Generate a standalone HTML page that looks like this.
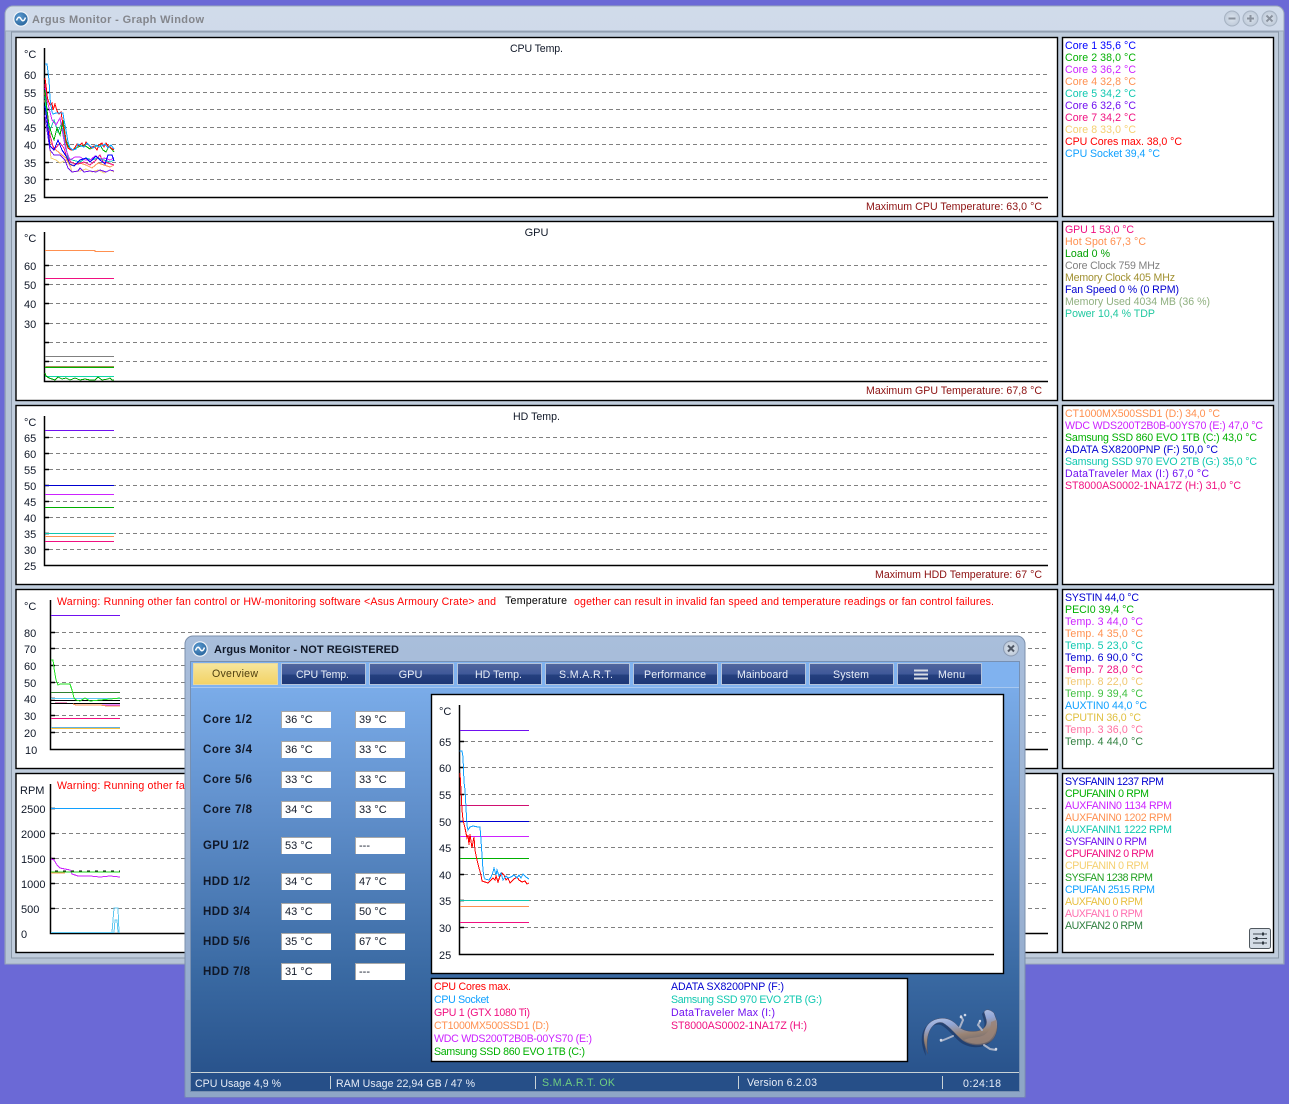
<!DOCTYPE html>
<html><head><meta charset="utf-8"><title>Argus Monitor</title>
<style>
html,body{margin:0;padding:0;background:#6b69d6;width:1289px;height:1104px;overflow:hidden}
svg{display:block;position:absolute;left:0;top:0}
text{font-family:"Liberation Sans",sans-serif;font-size:11px;fill:#101828}
text[textLength]{font-size:10.6px}
.b{font-weight:bold}
.w{fill:#e8eef8}
.g line.d,.d{stroke:#808080;stroke-dasharray:4 3;stroke-width:1;shape-rendering:crispEdges}
polyline{fill:none;stroke-width:1;shape-rendering:crispEdges}
.bl{stroke:#000;stroke-width:1.5;fill:none}
.bx{fill:#fff;stroke:#000;stroke-width:1.4}
.fb{fill:#fff;stroke:none}
.tab{stroke:#b4c4dc;stroke-width:1;fill:url(#tabg)}
</style></head><body>
<svg width="1289" height="1104" viewBox="0 0 1289 1104" xmlns="http://www.w3.org/2000/svg">
<defs>
<linearGradient id="tb" x1="0" y1="0" x2="0" y2="1"><stop offset="0" stop-color="#d0dbea"/><stop offset="1" stop-color="#b5c3d6"/></linearGradient>
<linearGradient id="dt" x1="0" y1="0" x2="0" y2="1"><stop offset="0" stop-color="#a9bedb"/><stop offset="1" stop-color="#8fa8cb"/></linearGradient>
<linearGradient id="body" x1="0" y1="0" x2="0" y2="1"><stop offset="0" stop-color="#80b2ef"/><stop offset="0.35" stop-color="#608fcb"/><stop offset="0.72" stop-color="#3a6aa3"/><stop offset="1" stop-color="#264f88"/></linearGradient>
<linearGradient id="tabg" x1="0" y1="0" x2="0" y2="1"><stop offset="0" stop-color="#52679f"/><stop offset="0.5" stop-color="#3f5899"/><stop offset="0.55" stop-color="#25407f"/><stop offset="1" stop-color="#1c3675"/></linearGradient>
<linearGradient id="gold" x1="0" y1="0" x2="0" y2="1"><stop offset="0" stop-color="#f6e69c"/><stop offset="1" stop-color="#f3d264"/></linearGradient>
<linearGradient id="liz" x1="0" y1="0" x2="0.3" y2="1"><stop offset="0" stop-color="#d2ddf4"/><stop offset="0.4" stop-color="#93a7d6"/><stop offset="0.65" stop-color="#9a8474"/><stop offset="1" stop-color="#55586a"/></linearGradient>
<radialGradient id="ico" cx="0.4" cy="0.35" r="0.8"><stop offset="0" stop-color="#5b9ad0"/><stop offset="1" stop-color="#1f5a92"/></radialGradient>
<radialGradient id="btn" cx="0.5" cy="0.5" r="0.6"><stop offset="0" stop-color="#dce4ee"/><stop offset="0.7" stop-color="#c4cfdd"/><stop offset="1" stop-color="#a4b0c0"/></radialGradient>
</defs>

<!-- Main window -->
<path d="M5,964V14a8,8 0 0 1 8,-8H1276a8,8 0 0 1 8,8V964Z" fill="url(#tb)" stroke="#9aa8bb"/>
<rect x="5.5" y="31" width="1278" height="933" fill="#b6c4d6" stroke="#9aa8bb"/>
<rect x="11.5" y="32" width="1267" height="926" fill="#c0cddd" stroke="#8a98a8"/>
<circle cx="21" cy="19" r="7.2" fill="url(#ico)" stroke="#f0f4fa" stroke-width="1.2"/>
<path d="M16.5,20.5c1.5,-4 3,-4 4.5,-1.5s3,2.5 4.5,-1.5" stroke="#fff" stroke-width="1.5" fill="none"/>
<text x="32" y="23" class="b" style="fill:#84868c;font-size:11px" textLength="172">Argus Monitor - Graph Window</text>
<g fill="url(#btn)" stroke="#a6b2c2"><circle cx="1232" cy="18.5" r="7.5"/><circle cx="1250.5" cy="18.5" r="7.5"/><circle cx="1269.5" cy="18.5" r="7.5"/></g>
<g stroke="#8a929e" stroke-width="2" fill="none"><path d="M1228.5,18.5h7"/><path d="M1247,18.5h7M1250.5,15v7"/><path d="M1266.5,15.5l6,6M1272.5,15.5l-6,6"/></g>

<!-- Panels -->
<g class="bx">
<rect class="bx" x="16" y="37.5" width="1041.5" height="179"/><rect class="bx" x="1062.5" y="37.5" width="211" height="179"/>
<rect class="bx" x="16" y="221.5" width="1041.5" height="179"/><rect class="bx" x="1062.5" y="221.5" width="211" height="179"/>
<rect class="bx" x="16" y="405.5" width="1041.5" height="179"/><rect class="bx" x="1062.5" y="405.5" width="211" height="179"/>
<rect class="bx" x="16" y="589.5" width="1041.5" height="179"/><rect class="bx" x="1062.5" y="589.5" width="211" height="179"/>
<rect class="bx" x="16" y="773.5" width="1041.5" height="179"/><rect class="bx" x="1062.5" y="773.5" width="211" height="179"/>
</g>

<!-- CPU panel -->
<text x="536.5" y="52" text-anchor="middle" textLength="53">CPU Temp.</text>
<g><text x="24" y="58">°C</text><text x="24" y="79">60</text><text x="24" y="97">55</text><text x="24" y="114">50</text><text x="24" y="132">45</text><text x="24" y="149">40</text><text x="24" y="167">35</text><text x="24" y="184">30</text><text x="24" y="202">25</text></g>
<g class="d"><line x1="49" x2="1048" y1="74.5" y2="74.5"/><line x1="49" x2="1048" y1="92.5" y2="92.5"/><line x1="49" x2="1048" y1="109.5" y2="109.5"/><line x1="49" x2="1048" y1="127.5" y2="127.5"/><line x1="49" x2="1048" y1="144.5" y2="144.5"/><line x1="49" x2="1048" y1="162.5" y2="162.5"/><line x1="49" x2="1048" y1="179.5" y2="179.5"/></g>
<path class="bl" d="M44.5,48V197.5H1048M44,74.5h5M44,92.5h5M44,109.5h5M44,127.5h5M44,144.5h5M44,162.5h5M44,179.5h5"/>
<polyline stroke="#f5d070" points="45,100 47,120 49,140 51,158 56,160 60,163 66,160 70,165 72,172 80,171 86,169 92,172 98,170 104,173 110,170 114,172"/>
<polyline stroke="#7010f0" points="45,115 47,130 50,150 54,155 60,155 65,160 68,168 72,172 78,171 80,168 84,172 90,171 96,172 100,170 106,172 110,170 114,171"/>
<polyline stroke="#ff9050" points="45,92 47,118 50,142 56,150 62,155 66,158 70,166 74,165 80,163 86,165 92,168 98,163 104,165 110,167 114,165"/>
<polyline stroke="#f01080" points="45,84 47,112 50,135 54,150 60,143 64,148 67,158 72,163 78,164 84,162 90,165 96,160 100,155 103,162 108,163 114,165"/>
<polyline stroke="#10c8b0" points="45,96 47,122 50,130 54,120 58,132 62,122 65,142 68,158 72,160 80,162 86,158 92,160 98,158 104,160 110,162 114,160"/>
<polyline stroke="#cc22ff" points="45,88 47,100 49,108 52,120 56,125 60,118 63,135 66,150 70,160 75,157 80,157 85,160 90,160 95,156 100,160 104,158 110,160 114,158"/>
<polyline stroke="#0000ff" points="45,106 47,120 50,146 54,150 58,140 62,150 66,156 70,164 74,166 80,160 86,158 90,162 96,156 100,160 105,164 108,155 112,155 114,161"/>
<polyline stroke="#00b000" points="45,90 47,110 49,125 52,135 54,140 57,128 60,135 63,120 66,140 68,146 72,150 78,147 84,145 90,149 96,146 100,145 103,150 106,152 109,146 114,152"/>
<polyline stroke="#ff0000" points="45,78 46,85 47,95 48,100 50,105 52,103 53,110 55,104 57,111 59,114 61,112 63,125 65,135 66,142 68,148 71,150 74,149 77,144 79,146 82,143 84,147 86,142 88,144 91,148 94,146 97,150 99,145 102,143 104,147 106,143 108,146 111,148 114,150"/>
<polyline stroke="#10a0ff" points="45,64 47,64 48,72 49,80 50,98 52,112 53,114 56,113 63,113 64,120 66,130 68,142 70,148 73,150 76,149 78,144 81,146 84,147 87,143 90,146 93,148 96,145 99,147 102,146 105,144 108,148 111,145 114,149"/>
<text x="1042" y="210" text-anchor="end" style="fill:#8c1010" textLength="176">Maximum CPU Temperature: 63,0 °C</text>
<g><text x="1065" y="49" style="fill:#0000ff" textLength="71">Core 1 35,6 °C</text><text x="1065" y="61" style="fill:#00b000" textLength="71">Core 2 38,0 °C</text><text x="1065" y="73" style="fill:#cc22ff" textLength="71">Core 3 36,2 °C</text><text x="1065" y="85" style="fill:#ff9050" textLength="71">Core 4 32,8 °C</text><text x="1065" y="97" style="fill:#10c8b0" textLength="71">Core 5 34,2 °C</text><text x="1065" y="109" style="fill:#7010f0" textLength="71">Core 6 32,6 °C</text><text x="1065" y="121" style="fill:#f01080" textLength="71">Core 7 34,2 °C</text><text x="1065" y="133" style="fill:#f5d070" textLength="71">Core 8 33,0 °C</text><text x="1065" y="145" style="fill:#ff0000" textLength="117">CPU Cores max. 38,0 °C</text><text x="1065" y="157" style="fill:#10a0ff" textLength="95">CPU Socket 39,4 °C</text></g>

<!-- GPU panel -->
<text x="536.5" y="236" text-anchor="middle">GPU</text>
<g><text x="24" y="242">°C</text><text x="24" y="270">60</text><text x="24" y="289">50</text><text x="24" y="308">40</text><text x="24" y="328">30</text></g>
<g class="d"><line x1="49" x2="1048" y1="265.5" y2="265.5"/><line x1="49" x2="1048" y1="284.5" y2="284.5"/><line x1="49" x2="1048" y1="303.5" y2="303.5"/><line x1="49" x2="1048" y1="323.5" y2="323.5"/><line x1="49" x2="1048" y1="342.5" y2="342.5"/><line x1="49" x2="1048" y1="361.5" y2="361.5"/></g>
<path class="bl" d="M44.5,232V381.5H1048M44,265.5h5M44,284.5h5M44,303.5h5M44,323.5h5M44,342.5h5M44,361.5h5"/>
<polyline stroke="#ff9050" points="45,250.5 95,250.5 95,251.5 114,251.5"/>
<polyline stroke="#f01080" points="45,278.5 114,278.5"/>
<polyline stroke="#808080" points="45,356.5 114,356.5"/>
<polyline stroke="#a09050" points="45,366.5 114,366.5"/>
<polyline stroke="#00b000" points="45,367.5 114,367.5"/>
<polyline stroke="#10d8a8" points="45,376.5 114,376.5"/>
<polyline stroke="#00a000" points="45,373 46,376 49,378 52,379 55,380 58,377 62,379 66,378 70,380 75,378 80,380 85,379 90,380 95,380 98,377 102,380 108,379 110,378 112,380 114,380"/>
<text x="1042" y="394" text-anchor="end" style="fill:#8c1010" textLength="176">Maximum GPU Temperature: 67,8 °C</text>
<g><text x="1065" y="233" style="fill:#f01080" textLength="69">GPU 1 53,0 °C</text><text x="1065" y="245" style="fill:#ff9050" textLength="81">Hot Spot 67,3 °C</text><text x="1065" y="257" style="fill:#00a000" textLength="45">Load 0 %</text><text x="1065" y="269" style="fill:#808080" textLength="95">Core Clock 759 MHz</text><text x="1065" y="281" style="fill:#a09030" textLength="110">Memory Clock 405 MHz</text><text x="1065" y="293" style="fill:#0000d0" textLength="114">Fan Speed 0 % (0 RPM)</text><text x="1065" y="305" style="fill:#90b080" textLength="145">Memory Used 4034 MB (36 %)</text><text x="1065" y="317" style="fill:#20c8a0" textLength="90">Power 10,4 % TDP</text></g>

<!-- HD panel -->
<text x="536.5" y="420" text-anchor="middle" textLength="47">HD Temp.</text>
<g><text x="24" y="426">°C</text><text x="24" y="442">65</text><text x="24" y="458">60</text><text x="24" y="474">55</text><text x="24" y="490">50</text><text x="24" y="506">45</text><text x="24" y="522">40</text><text x="24" y="538">35</text><text x="24" y="554">30</text><text x="24" y="570">25</text></g>
<g class="d"><line x1="49" x2="1048" y1="437.5" y2="437.5"/><line x1="49" x2="1048" y1="453.5" y2="453.5"/><line x1="49" x2="1048" y1="469.5" y2="469.5"/><line x1="49" x2="1048" y1="485.5" y2="485.5"/><line x1="49" x2="1048" y1="501.5" y2="501.5"/><line x1="49" x2="1048" y1="517.5" y2="517.5"/><line x1="49" x2="1048" y1="533.5" y2="533.5"/><line x1="49" x2="1048" y1="549.5" y2="549.5"/></g>
<path class="bl" d="M44.5,416V565.5H1048M44,437.5h5M44,453.5h5M44,469.5h5M44,485.5h5M44,501.5h5M44,517.5h5M44,533.5h5M44,549.5h5"/>
<polyline stroke="#7010f0" points="45,430.5 114,430.5"/>
<polyline stroke="#0000d0" points="45,485.5 114,485.5"/>
<polyline stroke="#cc22ff" points="45,494.5 114,494.5"/>
<polyline stroke="#00b000" points="45,507.5 114,507.5"/>
<polyline stroke="#10c8b0" points="45,533.5 114,533.5"/>
<polyline stroke="#ff9050" points="45,536.5 114,536.5"/>
<polyline stroke="#f01080" points="45,541.5 114,541.5"/>
<text x="1042" y="578" text-anchor="end" style="fill:#8c1010" textLength="167">Maximum HDD Temperature: 67 °C</text>
<g><text x="1065" y="417" style="fill:#ff9050" textLength="155">CT1000MX500SSD1 (D:) 34,0 °C</text><text x="1065" y="429" style="fill:#cc22ff" textLength="198">WDC WDS200T2B0B-00YS70 (E:) 47,0 °C</text><text x="1065" y="441" style="fill:#00b000" textLength="192">Samsung SSD 860 EVO 1TB (C:) 43,0 °C</text><text x="1065" y="453" style="fill:#0000d0" textLength="153">ADATA SX8200PNP (F:) 50,0 °C</text><text x="1065" y="465" style="fill:#10c8b0" textLength="192">Samsung SSD 970 EVO 2TB (G:) 35,0 °C</text><text x="1065" y="477" style="fill:#7010f0" textLength="144">DataTraveler Max (I:) 67,0 °C</text><text x="1065" y="489" style="fill:#f01080" textLength="176">ST8000AS0002-1NA17Z (H:) 31,0 °C</text></g>

<!-- Temperature panel -->
<g><text x="24" y="610">°C</text><text x="24" y="637">80</text><text x="24" y="653">70</text><text x="24" y="670">60</text><text x="24" y="687">50</text><text x="24" y="703">40</text><text x="24" y="720">30</text><text x="24" y="737">20</text><text x="25" y="754">10</text></g>
<g class="d"><line x1="55" x2="1048" y1="632.5" y2="632.5"/><line x1="55" x2="1048" y1="648.5" y2="648.5"/><line x1="55" x2="1048" y1="665.5" y2="665.5"/><line x1="55" x2="1048" y1="682.5" y2="682.5"/><line x1="55" x2="1048" y1="698.5" y2="698.5"/><line x1="55" x2="1048" y1="715.5" y2="715.5"/><line x1="55" x2="1048" y1="732.5" y2="732.5"/></g>
<path class="bl" d="M50.5,600V749.5H1048M50,632.5h5M50,648.5h5M50,665.5h5M50,682.5h5M50,698.5h5M50,715.5h5M50,732.5h5"/>
<polyline stroke="#7010f0" points="51,615.5 120,615.5"/>
<polyline stroke="#308030" points="51,692.5 120,692.5"/>
<polyline stroke="#60c8f0" points="51,698.5 120,698.5"/>
<polyline stroke="#000" points="51,700.5 120,700.5"/>
<polyline stroke="#000" points="51,703.5 120,703.5"/>
<polyline stroke="#f090c0" points="55,702.5 67,702.5"/>
<polyline stroke="#cc22ff" points="82,705 120,705"/>
<polyline stroke="#ff9050" points="73,704 76,705 100,705 107,706 120,706"/>
<polyline stroke="#20e020" points="51,660 53,660 54,668 56,680 58,685 60,684 70,684 72,690 74,698 76,700 80,701 85,698 90,701 100,700 110,699 120,698"/>
<polyline stroke="#f01080" points="51,718.5 120,718.5"/>
<polyline stroke="#60b0e0" points="51,727.5 120,727.5"/>
<polyline stroke="#f5c040" points="51,728.5 120,728.5"/>
<text x="57" y="605" style="fill:#ff0000" textLength="439">Warning: Running other fan control or HW-monitoring software &lt;Asus Armoury Crate&gt; and</text>
<text x="505" y="604" style="fill:#000" textLength="62">Temperature</text>
<text x="574" y="605" style="fill:#ff0000" textLength="420">ogether can result in invalid fan speed and temperature readings or fan control failures.</text>
<g><text x="1065" y="601" style="fill:#0000d0" textLength="74">SYSTIN 44,0 °C</text><text x="1065" y="613" style="fill:#00b000" textLength="69">PECI0 39,4 °C</text><text x="1065" y="625" style="fill:#cc22ff" textLength="78">Temp. 3 44,0 °C</text><text x="1065" y="637" style="fill:#ff9050" textLength="78">Temp. 4 35,0 °C</text><text x="1065" y="649" style="fill:#10c8b0" textLength="78">Temp. 5 23,0 °C</text><text x="1065" y="661" style="fill:#0000d0" textLength="78">Temp. 6 90,0 °C</text><text x="1065" y="673" style="fill:#f01080" textLength="78">Temp. 7 28,0 °C</text><text x="1065" y="685" style="fill:#f0c870" textLength="78">Temp. 8 22,0 °C</text><text x="1065" y="697" style="fill:#40c040" textLength="78">Temp. 9 39,4 °C</text><text x="1065" y="709" style="fill:#10a0ff" textLength="82">AUXTIN0 44,0 °C</text><text x="1065" y="721" style="fill:#e0c040" textLength="76">CPUTIN 36,0 °C</text><text x="1065" y="733" style="fill:#ff70a0" textLength="78">Temp. 3 36,0 °C</text><text x="1065" y="745" style="fill:#308040" textLength="78">Temp. 4 44,0 °C</text></g>

<!-- RPM panel -->
<g><text x="20" y="794">RPM</text><text x="21" y="813">2500</text><text x="21" y="838">2000</text><text x="21" y="863">1500</text><text x="21" y="888">1000</text><text x="21" y="913">500</text><text x="21" y="938">0</text></g>
<g class="d"><line x1="55" x2="1048" y1="808.5" y2="808.5"/><line x1="55" x2="1048" y1="833.5" y2="833.5"/><line x1="55" x2="1048" y1="858.5" y2="858.5"/><line x1="55" x2="1048" y1="883.5" y2="883.5"/><line x1="55" x2="1048" y1="908.5" y2="908.5"/></g>
<path class="bl" d="M50.5,784V933.5H1048M50,808.5h5M50,833.5h5M50,858.5h5M50,883.5h5M50,908.5h5"/>
<polyline stroke="#10a0ff" stroke-width="1.3" points="51,808.5 120,808.5"/>
<polyline stroke="#cc22ff" points="51,859 54,860 57,865 60,868 70,870 72,874 78,876 90,876 100,877 110,876 120,877"/>
<polyline stroke="#ff9050" points="51,873 65,873"/>
<polyline stroke="#20d020" points="51,872 120,872"/>
<polyline stroke="#000" stroke-dasharray="3 5" points="55,871 120,871"/>
<polyline stroke="#60c8f0" points="51,932.5 112,932.5 113,920 114,908 118,908 119,932.5 120,932.5"/>
<polyline stroke="#60c8f0" points="112,932.5 114,932.5 115,920 117,920 118,932.5"/>
<text x="57" y="789" style="fill:#ff0000" textLength="439">Warning: Running other fan control or HW-monitoring software &lt;Asus Armoury Crate&gt; and</text>
<g><text x="1065" y="785" style="fill:#0000d0" textLength="99">SYSFANIN 1237 RPM</text><text x="1065" y="797" style="fill:#00b000" textLength="84">CPUFANIN 0 RPM</text><text x="1065" y="809" style="fill:#cc22ff" textLength="107">AUXFANIN0 1134 RPM</text><text x="1065" y="821" style="fill:#ff9050" textLength="107">AUXFANIN0 1202 RPM</text><text x="1065" y="833" style="fill:#10c8b0" textLength="107">AUXFANIN1 1222 RPM</text><text x="1065" y="845" style="fill:#7010f0" textLength="82">SYSFANIN 0 RPM</text><text x="1065" y="857" style="fill:#f01080" textLength="89">CPUFANIN2 0 RPM</text><text x="1065" y="869" style="fill:#f5d070" textLength="84">CPUFANIN 0 RPM</text><text x="1065" y="881" style="fill:#20a020" textLength="88">SYSFAN 1238 RPM</text><text x="1065" y="893" style="fill:#10a0ff" textLength="90">CPUFAN 2515 RPM</text><text x="1065" y="905" style="fill:#e8c040" textLength="78">AUXFAN0 0 RPM</text><text x="1065" y="917" style="fill:#ff70b0" textLength="78">AUXFAN1 0 RPM</text><text x="1065" y="929" style="fill:#308040" textLength="78">AUXFAN2 0 RPM</text></g>
<rect x="1249.5" y="928.5" width="21" height="20" rx="2" fill="#d5dde6" stroke="#50585f"/>
<path d="M1253,934h14M1253,938.5h14M1253,943h14" stroke="#404850" stroke-width="1"/>
<path d="M1262,932.5h2v3h-2zM1255.5,937h2v3h-2zM1262,941.5h2v3h-2z" fill="#303840"/>

<!-- Dialog -->
<path d="M185,1097V644a8,8 0 0 1 8,-8H1017a8,8 0 0 1 8,8V1097Z" fill="url(#dt)" stroke="#7c90ac"/>
<rect x="186" y="1000" width="838" height="97" fill="#8ea6c6"/>
<rect x="190.5" y="661.5" width="829" height="430" fill="url(#body)" stroke="#7790b2"/>
<rect x="191" y="662" width="828" height="26" fill="#80b2ef"/>
<line x1="191" x2="1019" y1="687.5" y2="687.5" stroke="#a8c8f0"/>
<circle cx="200" cy="649" r="7.2" fill="url(#ico)" stroke="#f0f4fa" stroke-width="1.2"/>
<path d="M195.5,650.5c1.5,-4 3,-4 4.5,-1.5s3,2.5 4.5,-1.5" stroke="#fff" stroke-width="1.5" fill="none"/>
<text x="214" y="653" class="b" style="font-size:11px" textLength="185">Argus Monitor - NOT REGISTERED</text>
<circle cx="1011" cy="648.5" r="7.5" fill="url(#btn)" stroke="#8c9cb4"/>
<path d="M1008,645.5l6,6M1014,645.5l-6,6" stroke="#505866" stroke-width="2"/>

<!-- Tabs -->
<rect x="193.5" y="663.5" width="84" height="21" fill="url(#gold)" stroke="#e8d8a0"/>
<rect class="tab" x="281.5" y="663.5" width="84" height="21"/><rect class="tab" x="369.5" y="663.5" width="84" height="21"/><rect class="tab" x="457.5" y="663.5" width="84" height="21"/><rect class="tab" x="545.5" y="663.5" width="84" height="21"/><rect class="tab" x="633.5" y="663.5" width="84" height="21"/><rect class="tab" x="721.5" y="663.5" width="84" height="21"/><rect class="tab" x="809.5" y="663.5" width="84" height="21"/><rect class="tab" x="897.5" y="663.5" width="84" height="21"/>
<text x="235" y="677" text-anchor="middle" style="fill:#504010" textLength="46">Overview</text>
<g class="tt" text-anchor="middle"><text x="322.5" y="678" class="w" textLength="53">CPU Temp.</text><text x="410.5" y="678" class="w">GPU</text><text x="498.5" y="678" class="w" textLength="47">HD Temp.</text><text x="586" y="678" class="w" textLength="54">S.M.A.R.T.</text><text x="675" y="678" class="w" textLength="62">Performance</text><text x="762.5" y="678" class="w" textLength="51">Mainboard</text><text x="851" y="678" class="w" textLength="36">System</text><text x="951.5" y="678" class="w" textLength="27">Menu</text></g>
<path d="M914,670.5h14M914,674.5h14M914,678.5h14" stroke="#d8dce4" stroke-width="2"/>

<!-- Value rows -->
<g><text class="b" x="203" y="723" style="font-size:11.5px" textLength="49">Core 1/2</text><text class="b" x="203" y="753" style="font-size:11.5px" textLength="49">Core 3/4</text><text class="b" x="203" y="783" style="font-size:11.5px" textLength="49">Core 5/6</text><text class="b" x="203" y="813" style="font-size:11.5px" textLength="49">Core 7/8</text><text class="b" x="203" y="849" style="font-size:11.5px" textLength="46">GPU 1/2</text><text class="b" x="203" y="885" style="font-size:11.5px" textLength="47">HDD 1/2</text><text class="b" x="203" y="915" style="font-size:11.5px" textLength="47">HDD 3/4</text><text class="b" x="203" y="945" style="font-size:11.5px" textLength="47">HDD 5/6</text><text class="b" x="203" y="975" style="font-size:11.5px" textLength="47">HDD 7/8</text></g>
<g class="fb">
<rect x="281" y="711" width="50" height="17"/><rect x="355" y="711" width="50" height="17"/>
<rect x="281" y="741" width="50" height="17"/><rect x="355" y="741" width="50" height="17"/>
<rect x="281" y="771" width="50" height="17"/><rect x="355" y="771" width="50" height="17"/>
<rect x="281" y="801" width="50" height="17"/><rect x="355" y="801" width="50" height="17"/>
<rect x="281" y="837" width="50" height="17"/><rect x="355" y="837" width="50" height="17"/>
<rect x="281" y="873" width="50" height="17"/><rect x="355" y="873" width="50" height="17"/>
<rect x="281" y="903" width="50" height="17"/><rect x="355" y="903" width="50" height="17"/>
<rect x="281" y="933" width="50" height="17"/><rect x="355" y="933" width="50" height="17"/>
<rect x="281" y="963" width="50" height="17"/><rect x="355" y="963" width="50" height="17"/>
</g>
<path d="M281.5,728V711.5H331M355.5,728V711.5H405M281.5,758V741.5H331M355.5,758V741.5H405M281.5,788V771.5H331M355.5,788V771.5H405M281.5,818V801.5H331M355.5,818V801.5H405M281.5,854V837.5H331M355.5,854V837.5H405M281.5,890V873.5H331M355.5,890V873.5H405M281.5,920V903.5H331M355.5,920V903.5H405M281.5,950V933.5H331M355.5,950V933.5H405M281.5,980V963.5H331M355.5,980V963.5H405" stroke="#a8a8a8" fill="none"/>
<g><text x="285" y="723">36 °C</text><text x="359" y="723">39 °C</text><text x="285" y="753">36 °C</text><text x="359" y="753">33 °C</text><text x="285" y="783">33 °C</text><text x="359" y="783">33 °C</text><text x="285" y="813">34 °C</text><text x="359" y="813">33 °C</text><text x="285" y="849">53 °C</text><text x="359" y="849">---</text><text x="285" y="885">34 °C</text><text x="359" y="885">47 °C</text><text x="285" y="915">43 °C</text><text x="359" y="915">50 °C</text><text x="285" y="945">35 °C</text><text x="359" y="945">67 °C</text><text x="285" y="975">31 °C</text><text x="359" y="975">---</text></g>

<!-- Dialog graph -->
<rect class="bx" x="431.5" y="694.5" width="572" height="279"/>
<g><text x="439" y="715">°C</text><text x="439" y="746">65</text><text x="439" y="772">60</text><text x="439" y="799">55</text><text x="439" y="826">50</text><text x="439" y="852">45</text><text x="439" y="879">40</text><text x="439" y="905">35</text><text x="439" y="932">30</text><text x="439" y="959">25</text></g>
<g class="d"><line x1="464" x2="994" y1="741.5" y2="741.5"/><line x1="464" x2="994" y1="767.5" y2="767.5"/><line x1="464" x2="994" y1="794.5" y2="794.5"/><line x1="464" x2="994" y1="821.5" y2="821.5"/><line x1="464" x2="994" y1="847.5" y2="847.5"/><line x1="464" x2="994" y1="874.5" y2="874.5"/><line x1="464" x2="994" y1="900.5" y2="900.5"/><line x1="464" x2="994" y1="927.5" y2="927.5"/></g>
<path class="bl" d="M459.5,705V954.5H994M459,741.5h5M459,767.5h5M459,794.5h5M459,821.5h5M459,847.5h5M459,874.5h5M459,900.5h5M459,927.5h5"/>
<polyline stroke="#7010f0" points="460,730.5 529,730.5"/>
<polyline stroke="#d01070" points="460,805.5 529,805.5"/>
<polyline stroke="#0000d0" points="460,821.5 529,821.5"/>
<polyline stroke="#cc22ff" points="460,836.5 529,836.5"/>
<polyline stroke="#00b000" points="460,858.5 529,858.5"/>
<polyline stroke="#10c8b0" points="460,900.5 529,900.5"/>
<polyline stroke="#ff9050" points="460,906.5 529,906.5"/>
<polyline stroke="#f01080" points="460,922.5 529,922.5"/>
<polyline stroke="#ff0000" points="460,773 461,790 462,810 463,820 465,828 467,838 468,835 469,845 470,834 472,848 473,842 474,837 475,850 477,860 479,868 481,875 482,881 485,882 488,883 490,881 493,878 495,880 496,876 498,882 500,876 502,873 504,875 506,880 508,878 510,883 512,881 514,879 517,877 519,880 522,882 525,881 527,884 529,883"/>
<polyline stroke="#10a0ff" points="459.5,751 462,751 463,757 464,782 465,790 466,808 467,825 468,830 470,827 473,826 478,827 480,827 481,840 482,855 483,870 484,877 485,879 489,880 491,877 493,872 494,868 496,875 497,870 499,876 501,873 503,880 506,876 508,878 511,877 514,875 517,878 519,875 521,878 523,874 526,877 529,879"/>

<!-- Dialog legend -->
<rect class="bx" x="431.5" y="978.5" width="476" height="83"/>
<g><text x="434" y="990" style="fill:#ff0000" textLength="77">CPU Cores max.</text><text x="434" y="1003" style="fill:#10a0ff" textLength="55">CPU Socket</text><text x="434" y="1016" style="fill:#f01080" textLength="96">GPU 1 (GTX 1080 Ti)</text><text x="434" y="1029" style="fill:#ff9050" textLength="115">CT1000MX500SSD1 (D:)</text><text x="434" y="1042" style="fill:#cc22ff" textLength="158">WDC WDS200T2B0B-00YS70 (E:)</text><text x="434" y="1055" style="fill:#00b000" textLength="151">Samsung SSD 860 EVO 1TB (C:)</text><text x="671" y="990" style="fill:#0000d0" textLength="113">ADATA SX8200PNP (F:)</text><text x="671" y="1003" style="fill:#10c8b0" textLength="151">Samsung SSD 970 EVO 2TB (G:)</text><text x="671" y="1016" style="fill:#7010f0" textLength="104">DataTraveler Max (I:)</text><text x="671" y="1029" style="fill:#f01080" textLength="136">ST8000AS0002-1NA17Z (H:)</text></g>

<!-- Lizard -->
<g transform="translate(-2,2)" opacity=".4" fill="#101c40"><path d="M928,1054C922,1042 921,1026 934,1020C944,1016 952,1019 958,1026C963,1031 970,1032 977,1031C984,1030 988,1025 986,1019L984,1012C986,1008 991,1010 994,1013L997,1021C998,1030 996,1038 990,1042C982,1047 970,1046 962,1040C955,1034 950,1027 943,1023C935,1020 924,1030 928,1054Z"/></g>
<path d="M928,1054C922,1042 921,1026 934,1020C944,1016 952,1019 958,1026C963,1031 970,1032 977,1031C984,1030 988,1025 986,1019L984,1012C986,1008 991,1010 994,1013L997,1021C998,1030 996,1038 990,1042C982,1047 970,1046 962,1040C955,1034 950,1027 943,1023C935,1020 924,1030 928,1054Z" fill="url(#liz)" stroke="#4a5068" stroke-width=".5"/>
<path d="M964,1040C972,1045 982,1045 989,1041C995,1036 997,1028 996,1020L991,1022C991,1030 986,1036 978,1037C972,1038 968,1038 964,1040Z" fill="#9a8478" opacity=".85"/>
<g stroke="#a8b2c8" stroke-width="2" fill="none" stroke-linecap="round"><path d="M960,1027L963,1020L961,1016"/><path d="M982,1030L978,1025L980,1021"/><path d="M953,1036L946,1039L941,1041"/><path d="M984,1045L990,1049L996,1050"/></g>
<g fill="#d0d8e8"><circle cx="965" cy="1015" r="1.3"/><circle cx="961" cy="1017" r="1.3"/><circle cx="980" cy="1021" r="1.2"/><circle cx="941" cy="1040" r="1.3"/><circle cx="996" cy="1049" r="1.3"/></g>

<!-- Status bar -->
<line x1="191" x2="1019" y1="1072.5" y2="1072.5" stroke="#c8d2d6"/>
<rect x="191" y="1073" width="828" height="18" fill="#264f88"/>
<path d="M330.5,1076v13M535.5,1076v13M738.5,1076v13M942.5,1076v13" stroke="#c8d2d6"/>
<text x="195" y="1087" class="w" textLength="86">CPU Usage 4,9 %</text>
<text x="336" y="1087" class="w" textLength="139">RAM Usage 22,94 GB / 47 %</text>
<text x="542" y="1086" style="fill:#70d080" textLength="73">S.M.A.R.T. OK</text>
<text x="747" y="1086" class="w" textLength="70">Version 6.2.03</text>
<text x="963" y="1087" class="w" textLength="38">0:24:18</text>
</svg>
</body></html>
